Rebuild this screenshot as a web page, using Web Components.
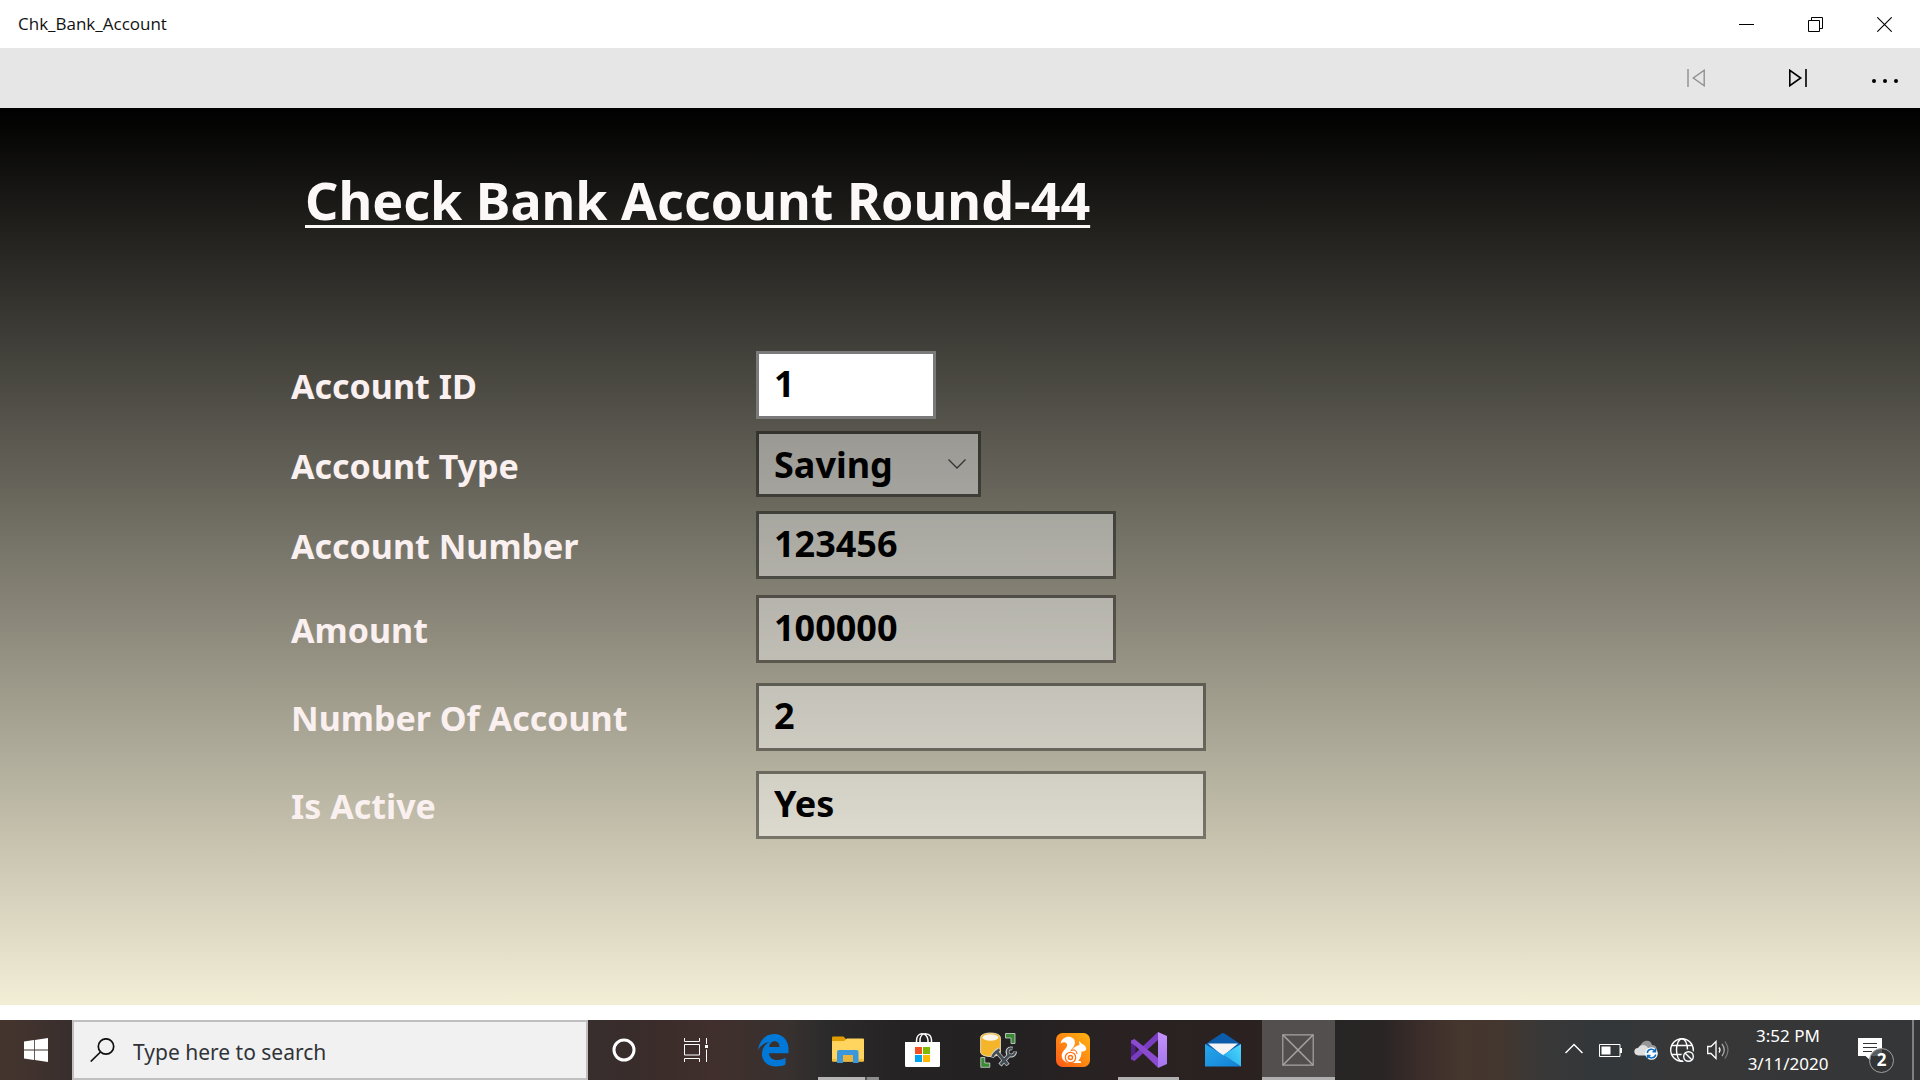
<!DOCTYPE html>
<html lang="en">
<head>
<meta charset="utf-8">
<title>Chk_Bank_Account</title>
<style>
  body { margin: 0; min-height: 100vh; display: flex; flex-direction: column; background: #fff; font-family: "Noto Sans", "Open Sans", sans-serif; }
  account-page { flex: 1; margin-bottom: 15px; }
</style>
</head>
<body>
<title-bar>Chk_Bank_Account</title-bar>
<command-bar></command-bar>
<account-page>
  <span slot="title">Check Bank Account Round-44</span>
  <form-field label="Account ID" value="1" size="small" editable></form-field>
  <form-field label="Account Type" value="Saving" size="choice" kind="select"></form-field>
  <form-field label="Account Number" value="123456" size="medium"></form-field>
  <form-field label="Amount" value="100000" size="medium" gap="normal"></form-field>
  <form-field label="Number Of Account" value="2" size="large" gap="wide"></form-field>
  <form-field label="Is Active" value="Yes" size="large" gap="wide"></form-field>
</account-page>
<task-bar></task-bar>

<script>
function define(name, html, setup) {
  const template = document.createElement('template');
  template.innerHTML = html;
  customElements.define(name, class extends HTMLElement {
    constructor() {
      super();
      this.attachShadow({ mode: 'open' }).append(template.content.cloneNode(true));
    }
    connectedCallback() { if (setup) setup(this, this.shadowRoot); }
  });
}

define('title-bar', `
<style>
  :host { display: flex; height: 48px; align-items: stretch; background: #fff; color: #111; }
  .name { flex: 1; padding-left: 18px; font: 400 17px/48px "Open Sans", sans-serif; }
  button { width: 69px; padding: 0; border: 0; background: none; display: flex; align-items: center; justify-content: center; }
  svg { display: block; fill: none; stroke: #000; }
  nav { display: flex; padding-right: 1px; }
</style>
<span class="name"><slot></slot></span>
<nav>
  <button aria-label="Minimize"><svg width="15" height="15"><path d="M0 7.5h15"/></svg></button>
  <button aria-label="Restore"><svg width="15" height="15"><path d="M.5 3.5h11v11H.5zM3.5 3.5v-3h11v11h-3"/></svg></button>
  <button aria-label="Close"><svg width="15" height="15"><path d="M.3.3l14.4 14.4M14.7.3L.3 14.7" stroke-width="1.1"/></svg></button>
</nav>`);

define('command-bar', `
<style>
  :host { display: flex; height: 60px; justify-content: flex-end; background: #e6e6e6; }
  button { width: 102px; padding: 0; border: 0; background: none; display: flex; align-items: center; justify-content: center; color: #000; }
  button:disabled { color: #8f8f8f; }
  button.more { width: 71px; }
  svg { display: block; fill: none; stroke: currentColor; stroke-width: 1.4; }
  .more svg { fill: currentColor; stroke: none; }
</style>
<button aria-label="Previous" disabled><svg width="18" height="18"><path d="M1 0v18M17.2 1.3v15.4L6.3 9z"/></svg></button>
<button aria-label="Next"><svg width="18" height="18"><path d="M17 0v18M.8 1.3v15.4L11.7 9z" stroke-width="1.6"/></svg></button>
<button aria-label="More" class="more"><svg width="28" height="18"><circle cx="3" cy="12" r="2"/><circle cx="14" cy="12" r="2"/><circle cx="25" cy="12" r="2"/></svg></button>`);

define('account-page', `
<style>
  :host { display: block; box-sizing: border-box; padding: 56px 290px 64px 291px; background: linear-gradient(#000, #f3eed6); }
  h1 { margin: 0 0 115px; padding-left: 14px; font: 700 52px/72px "Noto Sans", sans-serif; color: #fcf8f8; text-decoration: underline 3px; text-underline-offset: 5px; text-decoration-skip-ink: none; }
  form { display: flex; flex-direction: column; }
</style>
<h1><slot name="title"></slot></h1>
<form><slot></slot></form>`);

define('form-field', `
<style>
  :host { display: grid; grid-template-columns: 465px 1fr; align-items: start; margin-top: 12px; }
  :host(:first-of-type) { margin-top: 0; }
  :host([gap=normal]) { margin-top: 16px; }
  :host([gap=wide]) { margin-top: 20px; }
  :host([size=small]) { --w: 180px; }
  :host([size=choice]) { --w: 225px; }
  :host([size=medium]) { --w: 360px; }
  :host([size=large]) { --w: 450px; }
  label { padding-top: 2px; font: 700 34px/66px "Noto Sans", sans-serif; color: #faf0f0; }
  .box { display: grid; width: var(--w); }
  input, select { grid-area: 1/1; box-sizing: border-box; width: 100%; height: 68px; margin: 0; padding: 0 15px 4px; border: 3px solid rgba(0,0,0,.4); border-radius: 0; outline: 0;
    background: rgba(255,255,255,.4); background-clip: padding-box; color: #000; opacity: 1; font: 700 36px "Noto Sans", sans-serif; appearance: none; }
  input:enabled { background: #fff; border-color: #7a7a7a; }
  select { height: 66px; padding-bottom: 0; }
  svg { grid-area: 1/1; justify-self: end; align-self: center; margin-right: 15px; fill: none; stroke: #333; stroke-width: 1.3; pointer-events: none; }
</style>
<label for="control"></label>
<div class="box"></div>`, (host, root) => {
  const isSelect = host.getAttribute('kind') === 'select';
  const value = host.getAttribute('value');
  const control = document.createElement(isSelect ? 'select' : 'input');
  control.id = 'control';
  if (isSelect) control.add(new Option(value));
  else { control.type = 'text'; control.value = value; }
  control.disabled = !host.hasAttribute('editable');
  root.querySelector('label').textContent = host.getAttribute('label');
  const box = root.querySelector('.box');
  box.append(control);
  if (isSelect) box.insertAdjacentHTML('beforeend', '<svg width="18" height="10"><path d="M.5.5L9 9 17.5.5"/></svg>');
});

define('task-button', `
<style>
  :host { display: flex; width: 73px; }
  button { position: relative; flex: 1; padding: 0; border: 0; background: none; display: flex; align-items: center; justify-content: center; }
  :host([system]) { width: 72px; }
  :host([tray]) { width: 36px; }
  :host([active]) button { background: #544f4f; }
  :host([running]) button::after { content: ""; position: absolute; left: 6px; right: 6px; bottom: 0; height: 3px; background: #b0b0b0; }
  :host([grouped]) button::after { background: linear-gradient(90deg, #b5b5b5 47px, #555 47px, #555 49px, #8c8c8c 49px); }
  :host([active]) button::after { left: 0; right: 0; }
</style>
<button><slot></slot></button>`, (host, root) => {
  root.querySelector('button').setAttribute('aria-label', host.getAttribute('name'));
});

define('task-bar', `
<style>
  :host { display: flex; height: 60px; color: #fff;
    background: linear-gradient(90deg, #44342d 0, #3f322e 2%, #362d2d 4%, #372e2d 31%, #3a2c2a 34%, #402f2c 37%, #38312f 41%, #2c2b2b 43%, #252223 47%, #242122 53%, #2a2222 58%, #2b2121 65%, #272525 70%, #2a2525 72%, #3b2d2a 74%, #45362e 76%, #44372f 78%, #3a3837 80%, #353739 82%, #333739 84%, #373738 87%, #353637 100%); }
  .search { display: flex; align-items: center; box-sizing: border-box; width: 516px; padding-left: 16px; border: 2px solid #bfbfbf; background: #f1f1f1; }
  input { flex: 1; min-width: 0; height: 56px; box-sizing: border-box; padding: 3px 0 0 18px; border: 0; outline: 0; background: none; font: 400 21px "Noto Sans", sans-serif; color: #333; }
  input::placeholder { color: #303338; opacity: 1; }
  svg { display: block; }
  .apps { display: flex; gap: 2px; padding-left: 5px; flex: 1; }
  time { width: 104px; padding-top: 2px; text-align: center; font: 400 17px/28px "Noto Sans", sans-serif; white-space: pre-line; }
  .notes { position: relative; display: block; width: 36px; height: 36px; margin-top: 10px; }
  .badge { position: absolute; right: 0; bottom: 0; box-sizing: border-box; width: 25px; height: 25px; border: 1px solid #a0a0a0; border-radius: 50%; background: rgba(50,51,52,.8); color: #fff; font: 700 17px/22px "Noto Sans", sans-serif; text-align: center; }
  .notes svg { position: absolute; left: 0; top: 0; }
  .desktop { width: 8px; padding: 0; border: 0; border-left: 2px solid #808080; background: none; box-sizing: border-box; }
</style>
<task-button system name="Start"><svg width="24" height="24" fill="#fff"><path d="M0 3.4L10 2v9.5H0zM10.8 1.9L24 0v11.5H10.8zM0 12.4h10V22L0 20.6zM10.8 12.4H24V24L10.8 22.1z"/></svg></task-button>
<div class="search">
  <svg width="25" height="24" fill="none" stroke="#111" stroke-width="1.7"><circle cx="16" cy="8.5" r="7.7"/><path d="M10.5 14L.7 23.5"/></svg>
  <input type="text" aria-label="Search" placeholder="Type here to search">
</div>
<task-button system name="Cortana"><svg width="24" height="24" fill="none"><circle cx="12" cy="12" r="10" stroke="#fff" stroke-width="3"/></svg></task-button>
<task-button system name="Task View"><svg width="24" height="24" fill="none" stroke="#fff"><path d="M.5 0v3.5h15V0M.5 24v-3.5h15V24M.5 6.5h15v10.5H.5zM22.5 0v6M22.5 11.5V24"/><path fill="#fff" stroke="none" d="M21 7h3v3h-3z"/></svg></task-button>
<div class="apps">
  <task-button name="Edge"><svg width="31" height="33" viewBox="0 0 31 33" fill="#0078d7"><path d="M0 16C1.5 6.5 7.5 0 16 0c9.5 0 14.5 7 14.5 15v4.2H11c.2 4.8 4 6.8 8.5 6.8 3 0 5.5-.8 8-2.2v6.8C25 32 21.8 32.5 18 32.5 9.500 32.500 4 27.500 4 20c0-5 2.500-9.500 7.500-12C6.500 8.500 3 11.500 0 16zM11.200 13h10.200c0-3.500-1.600-5.700-4.900-5.700-3 0-5 2.500-5.300 5.700z"/></svg></task-button>
  <task-button running grouped name="File Explorer"><svg width="33" height="28" viewBox="0 0 33 28"><path fill="#e09c00" d="M0 1.500Q0 .5 1 .5h10.500L14 3v3H0z"/><path fill="#ffd45f" d="M0 6Q0 5 1 5h11l3-2.500h16q1 0 1 1V24.500q0 1-1 1H1q-1 0-1-1z"/><path fill="#f5bf3a" d="M0 23h32v1.500q0 1-1 1H1q-1 0-1-1z"/><path fill="#3b97dc" d="M5 27V16q0-2 2-2h17.500q2 0 2 2v11h-5.500v-8H11v8z"/><path fill="#e9b43b" d="M11 19h10v6.500H11z"/></svg></task-button>
  <task-button name="Store"><svg width="37" height="36" viewBox="0 0 37 36"><path d="M11.500 11V9c0-9 10-10 11.500-1v3M15 11V7c1-7 11-7 11.500 1v3" fill="none" stroke="#fff" stroke-width="1.5"/><path fill="#fff" d="M0 10h35v23.500q0 1.500-1.500 1.500H1.500Q0 35 0 33.500z"/><path fill="#f25022" d="M10 15h7v7h-7z"/><path fill="#7fba00" d="M18 15h7v7h-7z"/><path fill="#00a4ef" d="M10 23h7v7h-7z"/><path fill="#ffb900" d="M18 23h7v7h-7z"/></svg></task-button>
  <task-button name="SQL Server Management Studio"><svg width="37" height="36" viewBox="0 0 37 36"><path fill="#388a34" stroke="#d8d8d8" stroke-width=".8" d="M25.500 1.500h9.500v10h-4V6h-5.500zM.8 25.500h4V31h5v4.300H.8z"/><path fill="#f5b52b" stroke="#eee3c5" stroke-width=".9" d="M.6 5.500C.6-.5 20.400-.5 20.400 5.500v14.500c0 6-19.800 6-19.800 0z"/><ellipse cx="10.500" cy="5.500" rx="8" ry="3.300" fill="#fbf5ea"/><g fill="none" stroke="#cfd3d6" stroke-linejoin="round"><path stroke-width="4.200" d="M16 19l12 14M20 33l9.500-10.500"/><path stroke-width="4" d="M12 25.500c1-3.500 3-5.500 7.500-8.500"/><path stroke-width="3.800" d="M32.500 16.500c-4-1-6 2-4.500 5.500 2.500 3 7 1.500 7-2.500"/></g><g fill="none" stroke="#454d54"><path stroke-width="2.800" d="M16.500 19.500l11 13M20.500 32.500l9-10"/><path stroke-width="2.600" d="M12.500 25c1-3.500 3-5 7-7.500"/><path stroke-width="2.200" d="M32.500 16.700c-4-1-5.700 1.800-4.300 5.300 2.500 2.800 6.500 1.300 6.600-2.500"/></g></svg></task-button>
  <task-button name="UC Browser"><svg width="35" height="34" viewBox="0 0 35 34"><defs><linearGradient id="uc" x1="1" y1="0" x2="0" y2="1"><stop stop-color="#ffb511"/><stop offset=".55" stop-color="#ff8412"/><stop offset="1" stop-color="#ff5719"/></linearGradient></defs><rect width="34" height="34" rx="6.500" fill="url(#uc)"/><path fill="#fff" d="M11 29.500C6.500 28 4.500 23.500 6.500 19.500c2-3.500 5-5 4.500-8C10.500 9 8 8.500 4.500 10.500 5.500 5.500 10.500 3 14.500 4c5 1.200 5.500 6.500 3 10-1.500 2-3 3-3.500 5 3-4 6-6.500 9.500-7L23 8l3.500 3.200c2.500.8 3.300 2.500 3.800 5-1 1.800-3 2.500-5 2.500.5 3-.5 6-3 9l2.700.8v1.500H12z"/><circle cx="14.500" cy="24.500" r="5.200" fill="#fff" stroke="#ff741a" stroke-width="1.3"/><circle cx="14.500" cy="24.500" r="2" fill="none" stroke="#ff741a" stroke-width="1.6"/><path d="M15 17.500c3-1.500 6 0 6 3.500" stroke="#ff741a" fill="none" stroke-width="1.1"/></svg></task-button>
  <task-button running name="Visual Studio"><svg width="36" height="36" viewBox="0 0 36 36"><defs><linearGradient id="vs" x1="0" y1="0" x2="0" y2="1"><stop stop-color="#c493fa"/><stop offset="1" stop-color="#a474ee"/></linearGradient></defs><path fill="#52218a" d="M0 8.500L4.500 11v14L0 27.500z"/><path fill="#7a3cc0" d="M0 27.500l3.500 1.500L27 8V0L3 22.500 0 25z"/><path fill="#8b4bd0" d="M0 8.500L3.500 7 27 26v9.800L4.500 14 0 11z"/><path fill="url(#vs)" d="M27 0l9 4v28l-9 4z"/></svg></task-button>
  <task-button name="Mail"><svg width="37" height="34" viewBox="0 0 37 34"><defs><linearGradient id="ml" x1="0" y1="0" x2="1" y2="1"><stop stop-color="#28a8ea"/><stop offset="1" stop-color="#1380d8"/></linearGradient><linearGradient id="mr" x1="0" y1="1" x2="1" y2="0"><stop stop-color="#1fa4ea"/><stop offset="1" stop-color="#50d9ff"/></linearGradient></defs><path fill="#0b5cab" d="M0 11.500L16.500.5q1.500-1 3 0L36 11.500 18 24z"/><path fill="#f5f3f3" d="M3 10.500h30L18 23z"/><path fill="url(#ml)" d="M0 11l18 11 18 11.500H0z"/><path fill="url(#mr)" d="M36 11L18 22l18 11.500z"/></svg></task-button>
  <task-button running active name="Chk_Bank_Account"><svg width="33" height="32" fill="none" stroke="#a5a4a2"><path d="M.8.8h30.400v30.400H.8z" stroke-width="1.2"/><path d="M1 1l30 30M31 1L1 31" stroke-width="1.5"/></svg></task-button>
</div>
<task-button tray name="Show hidden icons"><svg width="18" height="14" fill="none" stroke="#fff" stroke-width="1.5"><path d="M.5 10L9 1.500l8.500 8.500"/></svg></task-button>
<task-button tray name="Battery"><svg width="23" height="13" fill="none" stroke="#fff"><path d="M.5.5h20.500v12H.5z"/><path d="M2.500 2.500h9v8h-9zM21 4h2v5h-2z" fill="#fff" stroke="none"/></svg></task-button>
<task-button tray name="OneDrive"><svg width="24" height="20" viewBox="0 0 24 20"><path fill="#979797" d="M6 7C8-1 17-1 18 5c4 0 5 3 5 6l-10 3z"/><path fill="#dedede" d="M4.500 15.500C-1 15.500-1 8 4 8c2-4 8-4 10 0 3 0 3 5 2 7.500z"/><circle cx="17.500" cy="13.500" r="6.300" fill="#fff"/><path fill="none" stroke="#0f6cbd" stroke-width="1.5" d="M13.200 13c.8-4.500 6.200-4.800 8-1.500M21.800 14.500c-1 4-6.200 4.500-8 1.200M21.500 8.500v3.200h-3M13.500 18.800v-3.200h3"/></svg></task-button>
<task-button tray name="Network"><svg width="25" height="25" viewBox="0 0 25 25" fill="none" stroke="#fff" stroke-width="1.4"><circle cx="12" cy="12" r="11.300"/><ellipse cx="12" cy="12" rx="5.500" ry="11.300"/><path d="M1.500 7.500h21M1.500 16.500h21"/><circle cx="18.500" cy="18.500" r="6.500" fill="#38393a" stroke="#38393a"/><circle cx="18.500" cy="18.500" r="4.800"/><path d="M15 15l7 7"/></svg></task-button>
<task-button tray name="Volume"><svg width="22" height="20" viewBox="0 0 22 20" fill="none" stroke="#fff" stroke-width="1.3"><path d="M.7 6.500H4L9 1.500v17L4 13.500H.7z"/><path d="M12 7.500q2 2.500 0 5"/><path stroke="#aaa" d="M15 4q4.500 6 0 12"/><path stroke="#777" d="M18 1.500q6 8.500 0 17"/></svg></task-button>
<time>3:52 PM
3/11/2020</time>
<task-button system name="Notifications"><span class="notes"><svg width="25" height="25"><path fill="#fff" d="M0 1h24v18h-11v5l-5.500-5H0z"/><path stroke="#333" fill="none" d="M5 6.500h14M5 10.500h14M5 14.500h9"/></svg><span class="badge">2</span></span></task-button>
<button class="desktop" aria-label="Show desktop"></button>`);
</script>
</body>
</html>
